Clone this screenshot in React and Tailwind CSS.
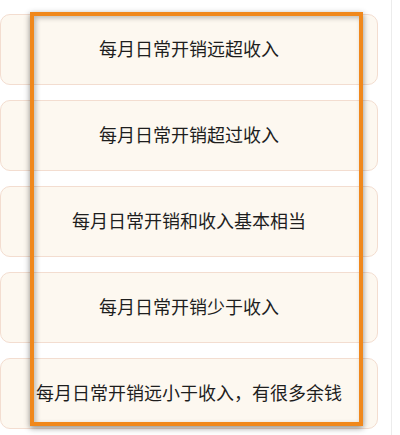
import React from 'react'

const options = [
  '每月日常开销远超收入',
  '每月日常开销超过收入',
  '每月日常开销和收入基本相当',
  '每月日常开销少于收入',
  '每月日常开销远小于收入，有很多余钱',
]

const App = () => {
  return (
    <div className="relative w-[400px] h-[435px] bg-white overflow-hidden"
      style={{ fontFamily: '"Noto Sans CJK SC", "Noto Sans", sans-serif' }}>
      <div className="flex flex-col gap-[15px] pt-[14px] w-[378px]">
        {options.map((text) => (
          <div key={text}
            className="h-[71px] flex items-center justify-center pb-[3px] rounded-[10px] border border-[#f3ddd0] bg-[#fdf8f0] text-[18px] text-[#1e1e1e] whitespace-nowrap">
            {text}
          </div>
        ))}
      </div>

      {/* scrollbar line */}
      <div className="absolute top-0 bottom-0 left-[391px] w-px bg-[#ececec]"></div>

      {/* highlight box */}
      <div className="absolute left-[30px] top-[12px] w-[333px] h-[414px] border-4 border-[#f0881c] pointer-events-none shadow-[0_2px_6px_rgba(0,0,0,0.45),inset_2px_2px_5px_rgba(0,0,0,0.25)]"></div>
    </div>
  )
}

export default App
